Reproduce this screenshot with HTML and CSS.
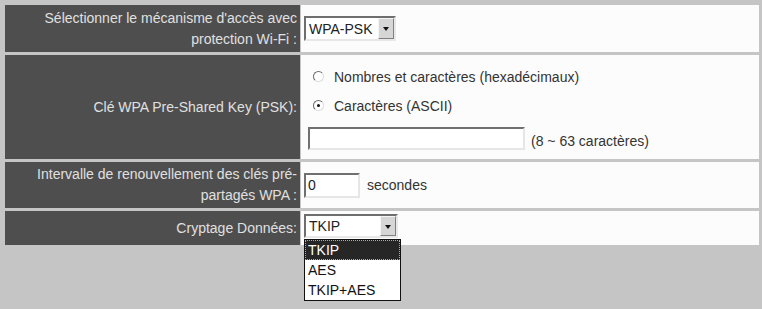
FILE: index.html
```html
<!DOCTYPE html>
<html lang="fr">
<head>
    <meta charset="UTF-8">
    <title>WPA-PSK</title>
    <link rel="stylesheet" href="styles.css">
</head>
<body>
    <div class="settings">
        <div class="label-cell">Sélectionner le mécanisme d'accès avec protection Wi-Fi :</div>
        <div class="value-cell">
            <div class="combo combo-auth">
                <span class="combo-text">WPA-PSK</span>
                <span class="combo-button"></span>
            </div>
        </div>

        <div class="label-cell">Clé WPA Pre-Shared Key (PSK):</div>
        <div class="value-cell key-cell">
            <label class="radio-line"><span class="radio"></span>Nombres et caractères (hexadécimaux)</label>
            <label class="radio-line"><span class="radio checked"></span>Caractères (ASCII)</label>
            <div class="key-line">
                <span class="text-box key-box"></span>
                <span class="hint">(8 ~ 63 caractères)</span>
            </div>
        </div>

        <div class="label-cell">Intervalle de renouvellement des clés pré-partagés WPA :</div>
        <div class="value-cell">
            <span class="text-box interval-box">0</span>
            <span class="unit">secondes</span>
        </div>

        <div class="label-cell">Cryptage Données:</div>
        <div class="value-cell">
            <div class="combo combo-cipher">
                <span class="combo-text">TKIP</span>
                <span class="combo-button"></span>
                <ul class="combo-list">
                    <li class="selected">TKIP</li>
                    <li>AES</li>
                    <li>TKIP+AES</li>
                </ul>
            </div>
        </div>
    </div>
</body>
</html>
```

FILE: styles.css
```css
html {
    background-color: #c5c5c5;
}

body {
    margin: 0;
    padding: 5px 3px 0 5px;
    min-height: 309px;
    box-sizing: border-box;
    background-color: #c5c5c5;
    font-family: "Liberation Sans", Arial, sans-serif;
    font-size: 14px;
    color: #333;
}

.settings {
    display: grid;
    grid-template-columns: 295px 1fr;
    grid-template-rows: 47px 104px 46px 34px;
    column-gap: 1px;
    row-gap: 3px;
}

.label-cell {
    background-color: #4e4e4e;
    color: #e0e0e0;
    text-align: right;
    line-height: 21px;
    padding: 0 3px 0 30px;
    display: flex;
    align-items: center;
    justify-content: flex-end;
}

.value-cell {
    background-color: #fcfcfc;
    display: flex;
    align-items: center;
    padding-left: 3px;
}

/* fake combo box, old windows look */
.combo {
    position: relative;
    height: 25px;
    box-sizing: border-box;
    border: 2px solid;
    border-color: #6e6e6e #e8e8e8 #e8e8e8 #6e6e6e;
    background: #fff;
    display: flex;
    align-items: center;
}

.combo-auth {
    width: 92px;
}

.combo-cipher {
    width: 94px;
    height: 24px;
    margin-top: -4px;
}

.combo-text {
    flex: 1;
    padding-left: 3px;
    color: #222;
}

.combo-button {
    width: 16px;
    height: 100%;
    box-sizing: border-box;
    background-color: #d6d6d6;
    border: 1px solid;
    border-color: #f4f4f4 #808080 #808080 #f4f4f4;
    position: relative;
}

.combo-button::after {
    content: "";
    position: absolute;
    left: 4px;
    top: 8px;
    border-left: 3px solid transparent;
    border-right: 3px solid transparent;
    border-top: 4px solid #111;
}

.combo-list {
    position: absolute;
    top: 23px;
    left: -2px;
    width: 97px;
    margin: 0;
    padding: 0;
    list-style: none;
    background: #fff;
    border: 1px solid #111;
    box-sizing: border-box;
    z-index: 2;
}

.combo-list li {
    height: 20px;
    line-height: 20px;
    padding-left: 3px;
    color: #111;
}

.combo-list li.selected {
    background-color: #262626;
    color: #fff;
    outline: 1px dotted #aaa;
    outline-offset: -1px;
}

.key-cell {
    flex-direction: column;
    align-items: flex-start;
    justify-content: flex-start;
    padding-top: 7px;
}

.radio-line {
    display: flex;
    align-items: center;
    height: 29px;
    padding-left: 9px;
    color: #333;
}

.radio {
    width: 11px;
    height: 11px;
    box-sizing: border-box;
    border-radius: 50%;
    border: 1px solid;
    border-color: #6a6a6a #dcdcdc #dcdcdc #6a6a6a;
    background: #fff;
    margin-right: 10px;
    position: relative;
}

.radio.checked::after {
    content: "";
    position: absolute;
    left: 3px;
    top: 3px;
    width: 3px;
    height: 3px;
    border-radius: 50%;
    background: #111;
}

.key-line {
    display: flex;
    align-items: center;
    margin-top: 7px;
    padding-left: 4px;
}

.text-box {
    display: inline-block;
    box-sizing: border-box;
    border: 2px solid;
    border-color: #707070 #e6e6e6 #e6e6e6 #707070;
    background: #fff;
    color: #222;
    padding-left: 2px;
}

.key-box {
    width: 217px;
    height: 23px;
}

.hint {
    margin-left: 6px;
    padding-top: 4px;
}

.interval-box {
    width: 56px;
    height: 25px;
    line-height: 21px;
}

.unit {
    margin-left: 7px;
}
```
